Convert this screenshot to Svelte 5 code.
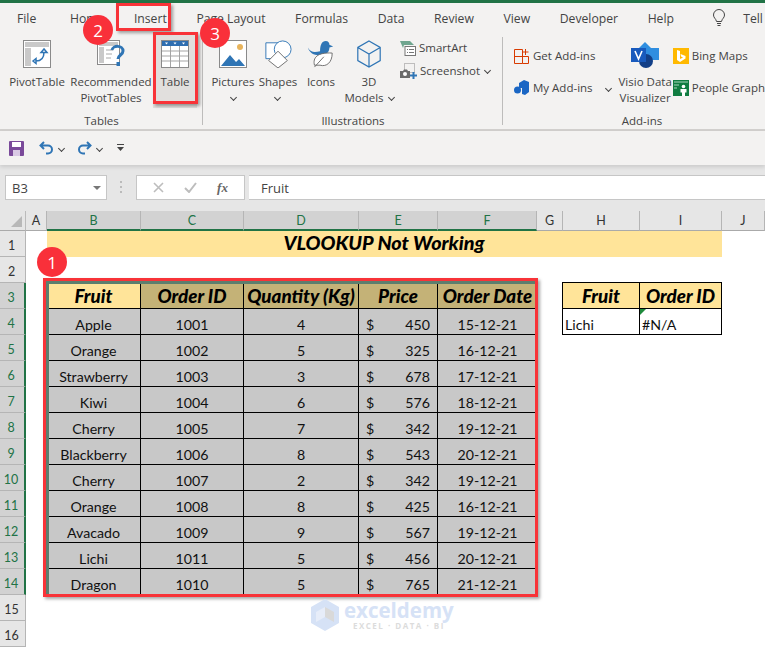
<script>
  const colNames = ['A','B','C','D','E','F','G','H','I','J'];
  const selectedCols = ['B','C','D','E','F'];
  const data = [
    ['Apple',1001,4,450,'15-12-21'],['Orange',1002,5,325,'16-12-21'],['Strawberry',1003,3,678,'17-12-21'],
    ['Kiwi',1004,6,576,'18-12-21'],['Cherry',1005,7,342,'19-12-21'],['Blackberry',1006,8,543,'20-12-21'],
    ['Cherry',1007,2,342,'19-12-21'],['Orange',1008,8,425,'16-12-21'],['Avacado',1009,9,567,'19-12-21'],
    ['Lichi',1011,5,456,'20-12-21'],['Dragon',1010,5,765,'21-12-21']
  ];
  const tabs = ['File','Home','Insert','Page Layout','Formulas','Data','Review','View','Developer','Help'];
</script>

<div class="app">
  <div class="topbar"></div>
  <div class="tabs">
    {#each tabs as t}<span class="tab">{t}</span>{/each}
    <svg class="bulb" width="16" height="18" viewBox="0 0 16 18" fill="none" stroke="#444" stroke-width="1"><path d="M5.500 12.500C5 9.500 2.500 9 2.500 6a5.500 5.500 0 0 1 11 0c0 3-2.500 3.500-3 6.500zM6 14.500h4M6.500 16.500h3"/></svg>
    <span class="tab tell">Tell</span>
  </div>

  <div class="ribbon">
    <section class="group g1">
      <div class="items">
        <div class="btn w64">
          <svg class="ic" width="28" height="28" viewBox="0 0 28 28"><rect x=".5" y=".5" width="27" height="27" fill="#fff" stroke="#8a8a8a"/><rect x="2" y="2" width="24" height="5" fill="#c9c9c9"/><rect x="2" y="8" width="6" height="18" fill="#c9c9c9"/><path d="M13 21c5 0 8-3 8-9M10 21l3-2.500v5zM21 9l-3 3.500h6z" fill="none" stroke="#2f75b5" stroke-width="1.500"/></svg>
          <span>PivotTable</span>
        </div>
        <div class="btn w84">
          <svg class="ic" width="28" height="28" viewBox="0 0 28 28"><rect x=".5" y=".5" width="22" height="24" fill="#fff" stroke="#8a8a8a"/><rect x="2" y="2" width="19" height="4" fill="#c9c9c9"/><rect x="2" y="7" width="5" height="16" fill="#c9c9c9"/><path d="M9 10h7M9 14h6M9 18h5" stroke="#aaa"/><path d="M15 10c1-5 11-5 11 1 0 4-5 4-5 8" fill="none" stroke="#2f75b5" stroke-width="3"/><rect x="19.500" y="22" width="3.500" height="4" fill="#2f75b5"/></svg>
          <span>Recommended<br>PivotTables</span>
        </div>
        <div class="btn w44 active">
          <svg class="ic" width="28" height="28" viewBox="0 0 28 28"><rect x=".5" y=".5" width="27" height="27" fill="#fff" stroke="#8a8a8a"/><rect x="1" y="1" width="26" height="5" fill="#2f6eb0"/><path d="M4 2.500h3l-1.500 2zM12.500 2.500h3l-1.500 2zM21 2.500h3l-1.500 2z" fill="#fff"/><path d="M1 11h26M1 16h26M1 21h26M9.500 6v21M18.500 6v21" stroke="#a5a5a5"/></svg>
          <span>Table</span>
        </div>
      </div>
      <div class="glabel">Tables</div>
    </section>

    <section class="group g2">
      <div class="items">
        <div class="btn w44">
          <svg class="ic" width="28" height="28" viewBox="0 0 28 28"><rect x=".5" y=".5" width="27" height="27" fill="#fff" stroke="#8a8a8a"/><circle cx="21" cy="7" r="3" fill="#e8b45c"/><path d="M2 26l9-11 6 7 3-3 6 7z" fill="#2f75b5"/></svg>
          <span>Pictures<br><i class="chev"></i></span>
        </div>
        <div class="btn w46">
          <svg class="ic" width="30" height="30" viewBox="0 0 30 30" fill="none" stroke="#2f75b5" stroke-width="1"><path d="M2 3h17v17H2z" fill="#fff" stroke="#2f75b5"/><circle cx="20" cy="10" r="9" fill="#fff"/><path d="M15 12l10 10-10 8-10-8z" fill="#fff" stroke="#6a6a6a"/></svg>
          <span>Shapes<br><i class="chev"></i></span>
        </div>
        <div class="btn w40">
          <svg class="ic" width="30" height="30" viewBox="0 0 30 30"><path d="M1 8c3 6 8 5 13 4 0-7 2-11 6-11 3 0 4 2 4 4l4 2-4 1c0 5-3 7-8 8-7 1-13-1-15-8z" fill="#2f75b5"/><path d="M8 27c-2-8 3-14 19-13 0 10-6 15-13 13z" fill="#fff" stroke="#6a6a6a"/><path d="M8 29l10-11" stroke="#6a6a6a"/></svg>
          <span>Icons</span>
        </div>
        <div class="btn w56">
          <svg class="ic" width="28" height="30" viewBox="0 0 28 30" fill="none" stroke="#2f75b5" stroke-width="1.300"><path d="M14 1l12 7v14l-12 7-12-7V8zM2 8l12 7 12-7M14 15v14"/></svg>
          <span>3D<br>Models <i class="chev inl"></i></span>
        </div>
        <div class="smallcol">
          <div class="small">
            <svg width="16" height="16" viewBox="0 0 16 16"><path d="M0 1h10l4 4H4l-1 3z" fill="#6fa58f"/><rect x="5" y="6.500" width="10.500" height="9" fill="#fff" stroke="#777"/><path d="M7 9.500h1M9 9.500h5M7 12.500h1M9 12.500h5" stroke="#777"/></svg>
            <span>SmartArt</span>
          </div>
          <div class="small">
            <svg width="17" height="16" viewBox="0 0 17 16"><rect x="4.500" y=".5" width="10" height="9" fill="none" stroke="#888" stroke-dasharray="1 1"/><path d="M0 8h3l1-1.500h3L8 8h2v7H0z" fill="#6b6b6b"/><circle cx="5" cy="11" r="2" fill="#fff"/><path d="M13.500 9v7M10 12.500h7" stroke="#2f75b5" stroke-width="2"/></svg>
            <span>Screenshot <i class="chev inl"></i></span>
          </div>
        </div>
      </div>
      <div class="glabel">Illustrations</div>
    </section>

    <section class="group g3">
      <div class="items">
        <div class="addcol">
          <div class="small">
            <svg width="16" height="16" viewBox="0 0 16 16" fill="none" stroke="#d83b01"><path d="M.5 1.500h8v14H.5zM.5 8.500h14v7h-6M11.500 1v6M8.500 4h6"/></svg>
            <span>Get Add-ins</span>
          </div>
          <div class="small">
            <svg width="16" height="16" viewBox="0 0 16 16"><path d="M5 3l5-3 5 2v10l-4 3-3-1V8H5z" fill="#1a66c4"/><circle cx="3.500" cy="10" r="3.500" fill="#1a66c4"/></svg>
            <span>My Add-ins</span><i class="chev inl my"></i>
          </div>
        </div>
        <div class="btn w56 visio">
          <svg class="ic" width="28" height="26" viewBox="0 0 28 26"><path d="M14 0l7 7H7z" fill="#2f8ee0"/><rect x="14" y="6" width="14" height="12" fill="#2f8ee0"/><circle cx="15" cy="19" r="7" fill="#123f87"/><rect y="6" width="15" height="14" fill="#185abd"/><path d="M4 9l3.500 8L11 9" fill="none" stroke="#fff" stroke-width="1.600"/></svg>
          <span>Visio Data<br>Visualizer</span>
        </div>
        <div class="rightcol">
          <div class="small">
            <svg width="16" height="16" viewBox="0 0 16 16"><rect width="16" height="16" fill="#ffb900"/><path d="M4 2l3 1v8l3-1.500L8 8.500 7.500 6l5 2v2.500L7 14l-3-2z" fill="#fff"/></svg>
            <span>Bing Maps</span>
          </div>
          <div class="small">
            <svg width="16" height="16" viewBox="0 0 16 16"><rect width="16" height="16" fill="#107c41"/><path d="M1 2h14M1 5h5M1 8h3" stroke="#a8d5bc"/><circle cx="10.500" cy="6.500" r="1.800" fill="#fff"/><path d="M7.500 9h6v3.500H12V16H9v-3.500H7.500z" fill="#fff"/></svg>
            <span>People Graph</span>
          </div>
        </div>
      </div>
      <div class="glabel addlabel">Add-ins</div>
    </section>
  </div>

  <div class="qat">
    <svg width="15" height="15" viewBox="0 0 15 15"><rect width="15" height="15" rx="1" fill="#7a4a9a"/><rect x="3" y="1" width="9" height="5" fill="#fff"/><rect x="4" y="9" width="7" height="6" fill="#d9c9e4"/></svg>
    <svg class="q1" width="15" height="14" viewBox="0 0 15 14" fill="none" stroke="#2f75b5" stroke-width="2"><path d="M5 1L1.500 4.500 5 8M2 4.500h7a4 4 0 0 1 0 8H7"/></svg>
    <i class="chev q2"></i>
    <svg class="q3" width="15" height="14" viewBox="0 0 15 14" fill="none" stroke="#2f75b5" stroke-width="2"><path d="M10 1l3.500 3.500L10 8M13 4.500H6a4 4 0 0 0 0 8h2"/></svg>
    <i class="chev q2"></i>
    <svg class="q4" width="7" height="8" viewBox="0 0 7 8"><path d="M0 .5h7" stroke="#444"/><path d="M0 3h7L3.500 7z" fill="#444"/></svg>
  </div>

  <div class="fbar">
    <div class="namebox"><span>B3</span><i class="tri"></i></div>
    <div class="dots"></div>
    <div class="fbtns">
      <svg width="11" height="11" viewBox="0 0 11 11" stroke="#bdbdbd" stroke-width="1.600"><path d="M1 1l9 9M10 1l-9 9"/></svg>
      <svg width="13" height="11" viewBox="0 0 13 11" fill="none" stroke="#bdbdbd" stroke-width="2"><path d="M1 6l4 4 7-9"/></svg>
      <span class="fx">fx</span>
    </div>
    <div class="finput">Fruit</div>
  </div>

  <div class="sheet">
    <div class="corner"><i></i></div>
    {#each colNames as c}
      <div class="colh" class:sel={selectedCols.includes(c)}>{c}</div>
    {/each}

    {#each Array(16) as _, r}
      {@const n = r + 1}
      <div class="rowh" class:sel={n >= 3 && n <= 14}>{n}</div>
      <div class="c"></div>
      {#if n === 1}
        <div class="title">VLOOKUP Not Working</div>
        <div class="c"></div>
      {:else if n === 3}
        <div class="th first">Fruit</div>
        <div class="th">Order ID</div>
        <div class="th">Quantity (Kg)</div>
        <div class="th">Price</div>
        <div class="th last">Order Date</div>
        <div class="c"></div>
        <div class="lh l">Fruit</div>
        <div class="lh">Order ID</div>
        <div class="c"></div>
      {:else if n >= 4 && n <= 14}
        {@const d = data[n - 4]}
        <div class="td first">{d[0]}</div>
        <div class="td">{d[1]}</div>
        <div class="td">{d[2]}</div>
        <div class="td price"><span>$</span><span>{d[3]}</span></div>
        <div class="td last">{d[4]}</div>
        <div class="c"></div>
        {#if n === 4}
          <div class="ld l">Lichi</div>
          <div class="ld err">#N/A</div>
        {:else}
          <div class="c"></div><div class="c"></div>
        {/if}
        <div class="c"></div>
      {:else}
        {#each Array(9) as _x}<div class="c"></div>{/each}
      {/if}
    {/each}
  </div>

  <div class="mark m-insert"></div>
  <div class="mark m-table"></div>
  <div class="mark m-range"></div>
  <div class="badge b2">2</div>
  <div class="badge b3">3</div>
  <div class="badge b1">1</div>

  <div class="wm">
    <svg width="28" height="32" viewBox="0 0 28 32"><path d="M14 0l14 8v16l-14 8L0 24V8z" fill="#d6e2f6"/><path d="M14 8l9 5v10l-9-5z" fill="#d9d9d9"/><path d="M5 13l9-5v10l-9 5z" fill="#e7edf9"/></svg>
    <div class="wmt"><b>exceldemy</b><small>EXCEL · DATA · BI</small></div>
  </div>
</div>

<style>
  :global(body) { margin: 0; }
  .app { position: relative; width: 765px; height: 647px; overflow: hidden; background: #fff; font-family: "Open Sans", sans-serif; font-size: 11.5px; color: #444; }
  .topbar { height: 3px; background: #217346; }
  .tabs { height: 30px; background: #f3f2f1; display: flex; align-items: center; gap: 29.6px; padding-left: 17px; font-size: 12.2px; white-space: nowrap; }
  .tab:first-child { margin-right: 4px; }
  .bulb { margin-left: 7px; }
  .tell { margin-left: -13px; }
  .ribbon { height: 96px; display: flex; background: #f3f2f1; border-bottom: 2px solid #d2d0ce; }
  .group { display: flex; flex-direction: column; position: relative; box-sizing: border-box; flex: none; }
  .group::after { content: ""; position: absolute; right: 0; top: 4px; height: 88px; width: 1px; background: #bdbcbb; }
  .g1 { width: 203px; padding-left: 5px; }
  .g2 { width: 300px; padding-left: 8px; }
  .g3 { flex: 1 1 0; min-width: 0; padding-left: 11px; white-space: nowrap; }
  .g3::after { display: none; }
  .items { height: 80px; display: flex; }
  .glabel { height: 16px; line-height: 16px; text-align: center; padding-right: 5px; }
  .g2 .glabel { padding-right: 8px; }
  .addlabel { padding: 0 0 0 5px; }
  .btn { display: flex; flex-direction: column; align-items: center; padding-top: 7px; box-sizing: border-box; text-align: center; line-height: 16px; white-space: nowrap; }
  .ic { height: 28px; margin-bottom: 6px; flex: none; }
  .w64 { width: 64px; } .w84 { width: 84px; } .w44 { width: 44px; } .w46 { width: 46px; } .w40 { width: 40px; } .w56 { width: 56px; }
  .active { background: #e1dfdd; height: 75px; }
  .chev { display: inline-block; width: 4px; height: 4px; border-right: 1px solid #444; border-bottom: 1px solid #444; transform: rotate(45deg); vertical-align: 2px; }
  .inl { margin-left: 2px; }
  .my { margin-left: 10px; }
  .smallcol { margin-left: 3px; padding-top: 7px; display: flex; flex-direction: column; gap: 7px; }
  .addcol { width: 110px; padding-top: 15px; display: flex; flex-direction: column; gap: 16px; }
  .visio { margin-right: 1px; padding-top: 9px; }
  .visio .ic { height: 26px; margin-bottom: 6px; }
  .rightcol { padding-top: 15px; display: flex; flex-direction: column; gap: 16px; }
  .small { display: flex; align-items: center; gap: 3px; height: 16px; line-height: 16px; white-space: nowrap; }
  .small svg { flex: none; }
  .qat { height: 34px; background: #f3f2f1; display: flex; align-items: center; padding-left: 9px; box-shadow: 0 2px 4px rgba(0,0,0,.12); position: relative; }
  .q1 { margin-left: 15px; }
  .q2 { margin-left: 5px; }
  .q3 { margin-left: 13px; }
  .q4 { margin-left: 15px; }
  .fbar { height: 46px; background: #e6e6e6; box-sizing: border-box; padding: 10px 0 11px 5px; display: flex; align-items: stretch; font-size: 13px; }
  .namebox { width: 102px; background: #fff; border: 1px solid #c6c6c6; display: flex; align-items: center; justify-content: space-between; padding: 0 5px 0 6px; box-sizing: border-box; }
  .tri { border-left: 4px solid transparent; border-right: 4px solid transparent; border-top: 4px solid #777; }
  .dots { width: 2px; margin: 6px 14px 6px 13px; background: repeating-linear-gradient(#bbb 0 2px, transparent 2px 5px); }
  .fbtns { width: 109px; background: #fff; border: 1px solid #c6c6c6; box-sizing: border-box; display: flex; align-items: center; justify-content: space-around; padding: 0 6px; }
  .fx { font-family: "Liberation Serif", serif; font-style: italic; font-weight: bold; color: #666; font-size: 13px; }
  .finput { flex: 1; margin-left: 4px; background: #fff; border-top: 1px solid #c6c6c6; border-bottom: 1px solid #c6c6c6; padding-left: 12px; line-height: 24px; }
  .sheet { display: grid; grid-template-columns: 26px 21px 94px 103px 115px 79px 99px 26px 77px 82px 43px; grid-template-rows: 20px repeat(16, 26px); font-family: Lato, sans-serif; font-size: 14.2px; color: #111; }
  .corner { background: #e6e6e6; border-right: 1px solid #bbb; border-bottom: 1px solid #aaa; position: relative; box-sizing: border-box; }
  .corner i { position: absolute; right: 3px; bottom: 3px; width: 0; height: 0; border-left: 11px solid transparent; border-bottom: 11px solid #b8b8b8; }
  .colh { background: #e6e6e6; border-right: 1px solid #b5b5b5; border-bottom: 1px solid #aaa; box-sizing: border-box; text-align: center; font-size: 12.5px; line-height: 20px; color: #333; }
  .colh.sel { background: #d2d2d2; color: #217346; border-bottom: 2px solid #217346; }
  .rowh { background: #e6e6e6; border-right: 1px solid #b5b5b5; border-bottom: 1px solid #b5b5b5; box-sizing: border-box; text-align: center; font-size: 12.5px; line-height: 29px; padding-right: 2px; color: #333; }
  .rowh.sel { background: #d2d2d2; color: #217346; border-right: 2px solid #217346; }
  .title { grid-column: span 8; background: #ffe499; display: flex; align-items: center; justify-content: center; font-weight: 900; font-style: italic; font-size: 19.8px; color: #000; padding: 0 1px 4px 0; box-sizing: border-box; }
  .th, .td, .lh, .ld { box-sizing: border-box; display: flex; align-items: flex-end; justify-content: center; line-height: 19px; white-space: nowrap; }
  .th { background: #c4b277; border-right: 1px solid #000; border-bottom: 1px solid #000; font-weight: 900; font-style: italic; font-size: 18.8px; line-height: 25px; color: #000; }
  .th.first { background: #ffe499; }
  .td { background: #c8c8c8; border-right: 1px solid #000; border-bottom: 1px solid #000; }
  .td.last, .th.last { border-right: 0; }
  .price { justify-content: space-between; padding: 0 7px; }
  .lh { background: #ffe499; border: 1px solid #000; border-left: 0; border-top: 1px solid #000; margin-top: -1px; height: 27px; font-weight: 900; font-style: italic; font-size: 18.8px; line-height: 25px; color: #000; }
  .lh.l { border-left: 1px solid #000; margin-left: -1px; }
  .ld { background: #fff; border-right: 1px solid #000; border-bottom: 1px solid #000; justify-content: flex-start; padding-left: 2px; position: relative; }
  .ld.l { border-left: 1px solid #000; margin-left: -1px; }
  .err::before { content: ""; position: absolute; left: 0; top: 0; border-top: 6px solid #1e8a3c; border-right: 6px solid transparent; }
  .mark { position: absolute; box-sizing: border-box; border: 3px solid #f83338; box-shadow: 2px 2px 3px rgba(0,0,0,.35); }
  .m-insert { left: 116px; top: 3px; width: 55px; height: 28px; }
  .m-table { left: 153px; top: 32px; width: 45px; height: 72px; }
  .m-range { left: 43px; top: 278px; width: 495px; height: 319px; box-shadow: 2px 2px 3px rgba(0,0,0,.35), inset 3px 3px 0 #5d7e6e; }
  .badge { position: absolute; width: 30px; height: 30px; border-radius: 50%; background: #f9303a; color: #fff; display: flex; align-items: center; justify-content: center; font-family: "Open Sans", sans-serif; font-size: 17px; }
  .b2 { left: 83px; top: 15px; }
  .b3 { left: 200px; top: 18px; }
  .b1 { left: 37px; top: 247px; }
  .wm { position: absolute; left: 311px; top: 599px; display: flex; gap: 5px; }
  .wmt { display: flex; flex-direction: column; font-family: "Open Sans", sans-serif; }
  .wmt b { font-size: 20.5px; line-height: 22px; color: #d6e2f6; font-weight: 700; }
  .wmt small { font-size: 8px; line-height: 10px; color: #dcdcdc; letter-spacing: 1.500px; text-align: center; font-weight: 700; }
</style>
